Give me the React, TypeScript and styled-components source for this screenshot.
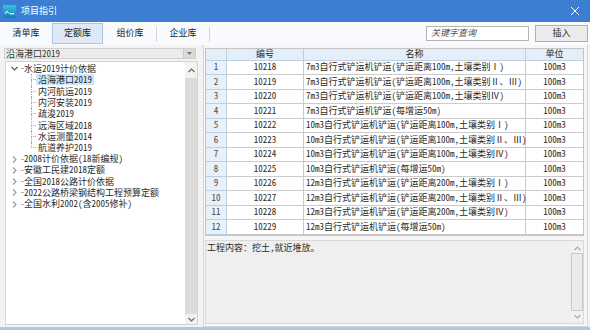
import React from 'react';
import styled, { createGlobalStyle } from 'styled-components';

const FONT = `"Noto Sans Mono CJK SC", "Noto Sans CJK SC", "Liberation Sans", sans-serif`;

const Global = createGlobalStyle`
  html, body { margin: 0; padding: 0; background: #ffffff; }
  body { font-family: ${FONT}; line-height: 1.15; }
  * { box-sizing: border-box; }
`;

const Window = styled.div`
  width: 590px;
  height: 330px;
  display: flex;
  flex-direction: column;
  background: #f3f3f3;
  border-bottom: 3px solid #a9c8ea;
  font-family: ${FONT};
  font-size: 9px;
  color: #2a2a2a;
  overflow: hidden;
`;

const TitleBar = styled.div`
  height: 22px;
  flex: none;
  display: flex;
  align-items: center;
  padding-left: 3px;
  background: #3c7fd2;
  color: #ffffff;
`;

const TitleText = styled.span`
  margin-left: 5px;
  font-size: 9px;
`;

const CloseBtn = styled.div`
  margin-left: auto;
  margin-right: 3px;
  width: 24px;
  height: 22px;
  display: flex;
  align-items: center;
  justify-content: center;
`;

const TabBar = styled.div`
  height: 23px;
  flex: none;
  display: flex;
  align-items: flex-start;
  padding-top: 1px;
  background: #f8fafd;
`;

const Tab = styled.div<{ $active?: boolean }>`
  width: ${p => (p.$active ? 51 : 52)}px;
  height: 21px;
  display: flex;
  align-items: center;
  justify-content: center;
  font-size: 9px;
  color: #222;
  background: ${p => (p.$active ? '#dde9f6' : 'transparent')};
  border: 1px solid ${p => (p.$active ? '#aac6e6' : 'transparent')};
  margin-right: ${p => (p.$active ? 1 : 0)}px;
`;

const TabSep = styled.div`
  width: 1px;
  height: 15px;
  margin-top: 4px;
  background: #d4d4d4;
`;

const SearchBox = styled.div`
  margin-left: auto;
  margin-top: 3px;
  width: 103px;
  height: 15px;
  border: 1px solid #b4b4b4;
  background: #ffffff;
  display: flex;
  align-items: center;
  padding-left: 4px;
  font-style: italic;
  color: #555;
  font-size: 9px;
`;

const InsertBtn = styled.div`
  margin-left: 6px;
  margin-right: 2px;
  margin-top: 2px;
  width: 53px;
  height: 17px;
  border: 1px solid #b0b0b0;
  background: #ebebeb;
  display: flex;
  align-items: center;
  justify-content: center;
  font-size: 9px;
  color: #333;
`;

const Body = styled.div`
  flex: 1;
  min-height: 0;
  display: flex;
`;

const LeftPane = styled.div`
  width: 200px;
  flex: none;
  display: flex;
  flex-direction: column;
  padding: 3px 2px 2px 4px;
`;

const Combo = styled.div`
  height: 11px;
  flex: none;
  display: flex;
  align-items: stretch;
  background: #ececec;
  border: 1px solid #d0d0d0;
  margin-right: 2px;
`;

const ComboText = styled.div`
  flex: 1;
  display: flex;
  align-items: center;
  padding-left: 1px;
  font-size: 9px;
  color: #333;
  line-height: 9px;
`;

const ComboArrow = styled.div`
  width: 12px;
  background: #dadada;
  border-left: 1px solid #c8c8c8;
  display: flex;
  align-items: center;
  justify-content: center;
`;

const TreeBox = styled.div`
  margin-top: 2px;
  margin-left: 1px;
  flex: 1;
  min-height: 0;
  display: flex;
  background: #ffffff;
  border: 1px solid #d3d3d3;
`;

const TreeList = styled.div`
  flex: 1;
  padding-top: 1px;
  display: flex;
  flex-direction: column;
`;

const TreeRow = styled.div`
  height: 11.3px;
  line-height: 10px;
  display: flex;
  align-items: center;
  white-space: nowrap;
  font-size: 9px;
`;

const Chevron = styled.div`
  margin-left: 4px;
  width: 8px;
  height: 100%;
  display: flex;
  align-items: center;
  justify-content: center;
`;

const RootStub = styled.div`
  margin-left: 3px;
  width: 2px;
  border-top: 1px dotted #b0b0b0;
`;

const RootLabel = styled.span`
  margin-left: 1px;
  color: #2a2a2a;
`;

const Children = styled.div`
  margin-left: 25px;
  display: flex;
  flex-direction: column;
`;

const Connector = styled.div`
  width: 5px;
  height: 100%;
  display: flex;
  flex-direction: column;
`;

const ConnTop = styled.div`
  flex: 1;
  border-left: 1px dotted #a8a8a8;
  border-bottom: 1px dotted #a8a8a8;
`;

const ConnBottom = styled.div<{ $last?: boolean }>`
  flex: 1;
  border-left: 1px dotted ${p => (p.$last ? 'transparent' : '#a8a8a8')};
`;

const ChildLabel = styled.span<{ $selected?: boolean }>`
  padding: 0 2px;
  height: 11px;
  line-height: 11px;
  background: ${p => (p.$selected ? '#cde6fb' : 'transparent')};
  color: #2a2a2a;
`;

const VScroll = styled.div<{ $light?: boolean }>`
  width: 12px;
  flex: none;
  display: flex;
  flex-direction: column;
  background: ${p => (p.$light ? '#f2f2f2' : '#ececec')};
`;

const ScrollArrow = styled.div<{ $h?: number }>`
  height: ${p => p.$h ?? 14}px;
  flex: none;
  display: flex;
  align-items: center;
  justify-content: center;
`;

const ScrollThumb = styled.div<{ $outlined?: boolean }>`
  flex: 1;
  background: ${p => (p.$outlined ? '#ebebeb' : '#dcdcdc')};
  border: 1px solid ${p => (p.$outlined ? '#c9c9c9' : 'transparent')};
`;

const RightPane = styled.div`
  flex: 1;
  min-width: 0;
  margin: 0 2px 0 3px;
  display: flex;
  flex-direction: column;
  padding: 3px 3px 2px 1px;
  background: #f6f6f6;
  border-left: 1px solid #d6d6d6;
  border-right: 1px solid #d6d6d6;
  border-bottom: 1px solid #d6d6d6;
`;

const Table = styled.div`
  flex: none;
  background: #ffffff;
  border: 1px solid #c4c4c4;
  display: flex;
  flex-direction: column;
`;

const Row = styled.div<{ $head?: boolean }>`
  display: grid;
  grid-template-columns: 21px 77px 222px 1fr;
  height: ${p => (p.$head ? 11.5 : 14.5)}px;
`;

const Cell = styled.div<{ $head?: boolean; $num?: boolean; $left?: boolean; $last?: boolean }>`
  display: flex;
  align-items: center;
  justify-content: ${p => (p.$left ? 'flex-start' : 'center')};
  padding-left: ${p => (p.$left ? 2 : 0)}px;
  white-space: nowrap;
  font-size: 9px;
  line-height: 10px;
  color: ${p => (p.$num ? '#4a4a4a' : '#2a2a2a')};
  background: ${p => (p.$head ? '#e3eef9' : p.$num ? '#e8f1fa' : '#ffffff')};
  border-right: ${p => (p.$last ? 'none' : `1px solid ${p.$head || p.$num ? '#bcd0e4' : '#cbcbcb'}`)};
  border-bottom: 1px solid ${p => (p.$head || p.$num ? '#bcd0e4' : '#cbcbcb')};
`;

const Desc = styled.div`
  margin-top: 4px;
  flex: 1;
  min-height: 0;
  display: flex;
  background: #efefef;
  border: 1px solid #d8d8d8;
`;

const DescText = styled.div`
  flex: 1;
  padding: 2px 1px;
  font-size: 9px;
  color: #2a2a2a;
`;

const DescScroll = styled.div`
  margin: 3px 0 2px 0;
  display: flex;
`;

const Chev = ({ dir, color = '#777' }: { dir: 'up' | 'down' | 'right'; color?: string }) => {
  const d =
    dir === 'up' ? 'M0.5 4 L3.5 1 L6.5 4' : dir === 'down' ? 'M0.5 1 L3.5 4 L6.5 1' : 'M1 0.5 L4 3.5 L1 6.5';
  const w = dir === 'right' ? 5 : 7;
  const h = dir === 'right' ? 7 : 5;
  return (
    <svg width={w} height={h} viewBox={`0 0 ${w} ${h}`}>
      <path d={d} fill="none" stroke={color} strokeWidth="1.1" />
    </svg>
  );
};

const AppIcon = () => (
  <svg width="13" height="13" viewBox="0 0 13 13">
    <defs>
      <linearGradient id="ig" x1="0" y1="0" x2="0" y2="1">
        <stop offset="0" stopColor="#35c3de" />
        <stop offset="1" stopColor="#137cc0" />
      </linearGradient>
    </defs>
    <rect x="0" y="0" width="13" height="13" fill="url(#ig)" />
    <path d="M2 9 L4 6 L6 8.5" fill="none" stroke="#ffffff" strokeWidth="1" />
    <rect x="7" y="8" width="4" height="1.3" fill="#ffffff" />
  </svg>
);

const CloseIcon = () => (
  <svg width="10" height="10" viewBox="0 0 10 10">
    <path d="M1 1 L9 9 M9 1 L1 9" stroke="#ffffff" strokeWidth="1" />
  </svg>
);

const children = ['沿海港口2019', '内河航运2019', '内河安装2019', '疏浚2019', '远海区域2018', '水运测量2014', '航道养护2019'];
const otherRoots = ['2008计价依据(18新编规)', '安徽工民建2018定额', '全国2018公路计价依据', '2022公路桥梁钢结构工程预算定额', '全国水利2002(含2005修补)'];

const sizes = ['7m3', '10m3', '12m3'];
const dists = ['100m', '100m', '200m'];
const tails = ['土壤类别Ⅰ)', '土壤类别Ⅱ、Ⅲ)', '土壤类别Ⅳ)'];
const rows: { code: string; name: string }[] = [];
sizes.forEach((s, i) => {
  tails.forEach(t => {
    rows.push({ code: '', name: `${s}自行式铲运机铲运(铲运距离${dists[i]},${t}` });
  });
  rows.push({ code: '', name: `${s}自行式铲运机铲运(每增运50m)` });
});
rows.forEach((r, i) => (r.code = String(10218 + i)));

export default function App() {
  return (
    <>
      <Global />
      <Window>
        <TitleBar>
          <AppIcon />
          <TitleText>项目指引</TitleText>
          <CloseBtn>
            <CloseIcon />
          </CloseBtn>
        </TitleBar>
        <TabBar>
          <Tab>清单库</Tab>
          <Tab $active>定额库</Tab>
          <Tab>组价库</Tab>
          <TabSep />
          <Tab>企业库</Tab>
          <TabSep />
          <SearchBox>关键字查询</SearchBox>
          <InsertBtn>插入</InsertBtn>
        </TabBar>
        <Body>
          <LeftPane>
            <Combo>
              <ComboText>沿海港口2019</ComboText>
              <ComboArrow>
                <svg width="5" height="3" viewBox="0 0 5 3">
                  <path d="M0 0 L5 0 L2.5 3 Z" fill="#777" />
                </svg>
              </ComboArrow>
            </Combo>
            <TreeBox>
              <TreeList>
                <TreeRow>
                  <Chevron>
                    <Chev dir="down" color="#555" />
                  </Chevron>
                  <RootStub />
                  <RootLabel>水运2019计价依据</RootLabel>
                </TreeRow>
                <Children>
                  {children.map((c, i) => (
                    <TreeRow key={c}>
                      <Connector>
                        <ConnTop />
                        <ConnBottom $last={i === children.length - 1} />
                      </Connector>
                      <ChildLabel $selected={i === 0}>{c}</ChildLabel>
                    </TreeRow>
                  ))}
                </Children>
                {otherRoots.map(r => (
                  <TreeRow key={r}>
                    <Chevron>
                      <Chev dir="right" color="#999" />
                    </Chevron>
                    <RootStub />
                    <RootLabel>{r}</RootLabel>
                  </TreeRow>
                ))}
              </TreeList>
              <VScroll $light>
                <ScrollArrow $h={16}>
                  <Chev dir="up" color="#666" />
                </ScrollArrow>
                <ScrollThumb />
                <ScrollArrow $h={10}>
                  <Chev dir="down" color="#666" />
                </ScrollArrow>
              </VScroll>
            </TreeBox>
          </LeftPane>
          <RightPane>
            <Table>
              <Row $head>
                <Cell $head />
                <Cell $head>编号</Cell>
                <Cell $head>名称</Cell>
                <Cell $head $last>单位</Cell>
              </Row>
              {rows.map((r, i) => (
                <Row key={r.code}>
                  <Cell $num>{i + 1}</Cell>
                  <Cell>{r.code}</Cell>
                  <Cell $left>{r.name}</Cell>
                  <Cell $last>100m3</Cell>
                </Row>
              ))}
            </Table>
            <Desc>
              <DescText>工程内容：挖土,就近堆放。</DescText>
              <DescScroll>
                <VScroll $light>
                  <ScrollArrow $h={9}>
                    <Chev dir="up" color="#aaa" />
                  </ScrollArrow>
                  <ScrollThumb $outlined />
                  <ScrollArrow $h={10}>
                    <Chev dir="down" color="#aaa" />
                  </ScrollArrow>
                </VScroll>
              </DescScroll>
            </Desc>
          </RightPane>
        </Body>
      </Window>
    </>
  );
}
